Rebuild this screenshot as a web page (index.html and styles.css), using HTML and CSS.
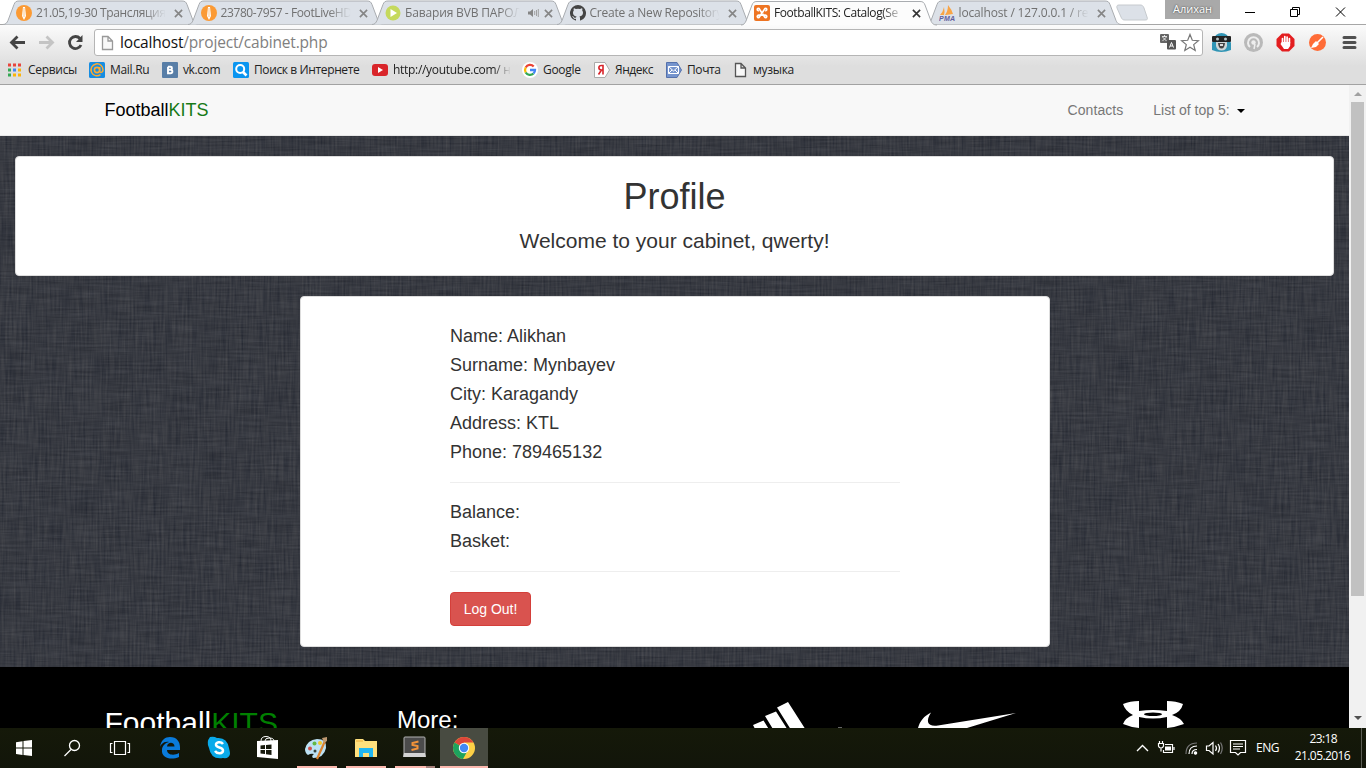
FILE: index.html
```html
<!DOCTYPE html>
<html lang="en">
<head>
<meta charset="utf-8">
<title>FootballKITS: Catalog</title>
<link rel="stylesheet" href="styles.css">
</head>
<body>
<svg class="defs" width="0" height="0">
  <defs>
    <symbol id="tab" viewBox="0 0 196 24"><path d="M0 24C3 24 4 22 5 20L11 4C12 1.500 13 .5 16 .5H179C182 .5 183 1.500 184 4L190 20C191 22 192 24 196 24" stroke="#a9acb0"/></symbol>
    <symbol id="x" viewBox="0 0 10 10"><path d="M1 1L9 9M9 1L1 9" fill="none" stroke="currentColor" stroke-width="1.800"/></symbol>
    <symbol id="flame" viewBox="0 0 16 16"><circle cx="8" cy="8" r="8" fill="#fb9a34"/><path d="M7 2H9L10 11L8 15L6 11Z" fill="#fff"/><path d="M8 3V12" stroke="#fbc88d"/></symbol>
    <symbol id="doc" viewBox="0 0 16 16"><path d="M3.500 1.500H9L13.500 6V14.500H3.500ZM9 1.500V6H13.500" fill="#f8f8f8" stroke="currentColor" stroke-width="1.300"/></symbol>
  </defs>
</svg>

<header class="chrome">
  <div class="tabs">
    <div class="tab"><svg class="shape"><use href="#tab"/></svg><svg class="i16"><use href="#flame"/></svg><span class="title t1">21.05,19-30 Трансляция</span><svg class="close"><use href="#x"/></svg></div>
    <div class="tab"><svg class="shape"><use href="#tab"/></svg><svg class="i16"><use href="#flame"/></svg><span class="title t2">23780-7957 - FootLiveHD</span><svg class="close"><use href="#x"/></svg></div>
    <div class="tab"><svg class="shape"><use href="#tab"/></svg><svg class="i16" viewBox="0 0 16 16"><circle cx="8" cy="8" r="7.500" fill="#c5d95d"/><path d="M5.500 4L12 8L5.500 12Z" fill="#fff"/></svg><span class="title t3">Бавария BVB ПАРОЛ</span><svg class="sound" viewBox="0 0 11 10"><path d="M0 3.500H2L5 1V9L2 6.500H0Z" fill="#858585"/><path d="M6.700 3V7M8.500 2V8M10.300 1V9" stroke="#999" stroke-width=".9"/></svg><svg class="close"><use href="#x"/></svg></div>
    <div class="tab"><svg class="shape"><use href="#tab"/></svg><svg class="i16" viewBox="0 0 16 16"><path fill="#444" d="M8 0A8 8 0 0 0 5.470 15.600C5.870 15.700 6 15.400 6 15.200V13.800C3.800 14.300 3.300 12.800 3.300 12.800C2.900 11.900 2.400 11.600 2.400 11.600C1.700 11.100 2.500 11.100 2.500 11.100C3.300 11.200 3.700 11.900 3.700 11.900C4.400 13.200 5.600 12.800 6 12.600C6.100 12.100 6.300 11.700 6.600 11.500C4.800 11.300 3 10.600 3 7.600C3 6.700 3.300 6 3.800 5.400C3.700 5.200 3.400 4.400 3.900 3.300C3.900 3.300 4.500 3.100 6 4.100A8 8 0 0 1 10 4.100C11.500 3.100 12.100 3.300 12.100 3.300C12.600 4.400 12.300 5.200 12.200 5.400C12.700 6 13 6.700 13 7.600C13 10.600 11.200 11.300 9.400 11.500C9.700 11.700 10 12.200 10 13V15.200C10 15.400 10.100 15.700 10.500 15.600A8 8 0 0 0 8 0Z"/></svg><span class="title t4">Create a New Repository</span><svg class="close"><use href="#x"/></svg></div>
    <div class="tab active"><svg class="shape"><use href="#tab"/></svg><svg class="i16" viewBox="0 0 16 16"><rect width="16" height="16" rx="2" fill="#ee7422"/><path d="M4.800 5.800C2.500 5.500 3 3 5 3.500L11 12.500C13 13 13.500 10.500 11.200 10.200H4.800C2.500 10.500 3 13 5 12.500L11 3.500C13 3 13.500 5.500 11.200 5.800" fill="none" stroke="#fff" stroke-width="1.700"/></svg><span class="title t5">FootballKITS: Catalog(Se</span><svg class="close"><use href="#x"/></svg></div>
    <div class="tab"><svg class="shape"><use href="#tab"/></svg><svg class="i16" viewBox="0 0 16 16"><path d="M1 10Q4 7 5 2Q6 7 5 10ZM6 10Q9 6 9 0Q13 5 14 9L7 10Z" fill="#f8a445"/><text x="0" y="15.500" class="pma" textLength="16">PMA</text></svg><span class="title t6">localhost / 127.0.0.1 / re</span><svg class="close"><use href="#x"/></svg></div>
    <svg class="newtab" viewBox="0 0 34 18"><path d="M4 1H25C27 1 28 1.500 29 4L32 13C33 15.500 32 16 30 16H10C8 16 7 15.500 6 13L2 4C1.500 2 2 1 4 1Z" fill="#dce1e8" stroke="#c6cace"/></svg>
    <div class="user">Алихан</div>
    <svg class="winbtns" viewBox="0 0 110 24"><path d="M2 12.500H12M47.500 9.500H54.500V16.500H47.500ZM49.500 9V7.500H56.500V14.500H55M93 7.500L102 16.500M102 7.500L93 16.500" fill="none" stroke="#000"/></svg>
  </div>

  <div class="toolbar">
    <svg class="nav" viewBox="0 0 94 34">
      <path d="M25 18.500H12M17.500 12.500L11.500 18.500L17.500 24.500" fill="none" stroke="#444" stroke-width="2.800"/>
      <path d="M39 18.500H52M46.500 12.500L52.500 18.500L46.500 24.500" fill="none" stroke="#c4c4c4" stroke-width="2.800"/>
      <path d="M80 14.500A6 6 0 1 0 81 21" fill="none" stroke="#444" stroke-width="2.800"/><path d="M82.500 11V18H76Z" fill="#444"/>
    </svg>
    <div class="omnibox"><svg class="i16 page-ico"><use href="#doc"/></svg><span class="url"><b>localhost</b>/project/cabinet.php</span>
      <svg class="omni-icons" viewBox="0 0 40 22"><rect x="0" y="2" width="9" height="9" rx="1" fill="#666"/><path d="M2 4.500H7M4.500 3V4.500M6.500 5L2.500 9M2.500 5L6.500 9" stroke="#fff" fill="none" stroke-width=".8"/><rect x="7" y="8" width="9" height="9.500" rx="1" fill="#555"/><path d="M9.500 15.500L11.500 10.500L13.500 15.500M10.300 14H12.700" stroke="#fff" fill="none"/><path d="M30 2.500L32.300 8.300L38.400 8.700L33.700 12.600L35.200 18.500L30 15.200L24.800 18.500L26.300 12.600L21.600 8.700L27.700 8.300Z" fill="#fff" stroke="#777" stroke-width="1.200"/></svg>
    </div>
    <svg class="exts" viewBox="0 0 163 34">
      <path d="M13 11Q18.500 7 24 11L28 19V26Q18 30 9 26V19Z" fill="#3195b5"/><rect x="9" y="12" width="19" height="6" rx="1" fill="#222"/><circle cx="14.500" cy="15" r="1.500" fill="#b8c4c8"/><circle cx="22.500" cy="15" r="1.500" fill="#b8c4c8"/><path d="M13 18H24V22Q23 26.500 18.500 26.500Q14 26.500 13 22Z" fill="#cfd6d7"/><path d="M15 19Q15.500 24.500 18.500 24.500Q21.500 24.500 22 19Z" fill="#444"/><path d="M17 20H20V22H17Z" fill="#ddd"/>
      <circle cx="50.500" cy="18.500" r="9.500" fill="#b9b9b9"/><path d="M47 23A5.500 5.500 0 1 1 54 23" fill="none" stroke="#eee" stroke-width="2"/><circle cx="50.500" cy="18.500" r="2.200" fill="#eee"/><path d="M52 20L51 25" stroke="#eee" stroke-width="1.500"/>
      <path d="M79 9.500H86L91.500 15V22L86 27.500H79L73.500 22V15Z" fill="#e31e20"/><path d="M79.500 19V14.500M81.800 18V12.500M84.100 18V13M86.400 19V14.500" stroke="#fff" stroke-width="1.700" stroke-linecap="round"/><path d="M78.700 18H87.200V22L85 25H81L77.500 20Z" fill="#fff"/>
      <circle cx="114.500" cy="18.500" r="8.500" fill="#ff6c37"/><path d="M120 13L114 19" stroke="#fff" stroke-width="1.600"/><path d="M113 17L116 20L113 23L108 24L110 20Z" fill="#fff"/>
      <path d="M141 13.500H152M141 18.500H152M141 23.500H152" stroke="#505050" stroke-width="3" stroke-linecap="round"/>
    </svg>
  </div>

  <nav class="bookmarks">
    <a class="bm b1"><svg class="i16" viewBox="0 0 16 16"><path d="M1 3H14" stroke="#e8453c" stroke-width="3" stroke-dasharray="3 2"/><path d="M1 8H4M1 13H4" stroke="#34a853" stroke-width="3"/><path d="M6 8H9" stroke="#4285f4" stroke-width="3"/><path d="M11 8H14M6 13H9M11 13H14" stroke="#fbb40a" stroke-width="3"/></svg><span>Сервисы</span></a>
    <a class="bm b2"><svg class="i16" viewBox="0 0 16 16"><rect width="16" height="16" rx="1.500" fill="#168de2"/><circle cx="8" cy="8" r="2.600" fill="none" stroke="#ffa930" stroke-width="1.600"/><path d="M10.700 5V9C10.700 11.500 14 10.500 14 8A6 6 0 1 0 11.500 12.700" fill="none" stroke="#ffa930" stroke-width="1.500"/></svg><span>Mail.Ru</span></a>
    <a class="bm b3"><svg class="i16" viewBox="0 0 16 16"><rect width="16" height="16" rx="1" fill="#587ea7"/><path d="M6 4.800H8.500C10.500 4.800 10.500 7.800 8.500 7.800H6M8.500 7.800C11 7.800 11 11.300 8.500 11.300H6V4.800" fill="none" stroke="#fff" stroke-width="1.900"/></svg><span>vk.com</span></a>
    <a class="bm b4"><svg class="i16" viewBox="0 0 16 16"><rect width="16" height="16" rx="1.500" fill="#0a95f0"/><circle cx="7.200" cy="7" r="4" fill="none" stroke="#fff" stroke-width="2"/><path d="M10 10L13.500 13.500" stroke="#fff" stroke-width="2.600"/></svg><span>Поиск в Интернете</span></a>
    <a class="bm b5"><svg class="i16" viewBox="0 0 16 16"><rect y="2" width="16" height="12" rx="3" fill="#d9252a"/><path d="M6 5L11 8L6 11Z" fill="#fff"/></svg><span>http://youtube.com/ н</span></a>
    <a class="bm b6"><svg class="i16" viewBox="0 0 16 16"><circle cx="8" cy="8" r="8" fill="#fff"/><g fill="none" stroke-width="2.300"><path d="M11.700 4.500A5 5 0 0 0 3.700 5.500" stroke="#ea4335"/><path d="M3.700 5.500A5 5 0 0 0 3.700 10.500" stroke="#fbbc05"/><path d="M3.700 10.500A5 5 0 0 0 11.500 11.500" stroke="#34a853"/><path d="M11.500 11.500Q13 10 13 8H8" stroke="#4285f4"/></g></svg><span>Google</span></a>
    <a class="bm b7"><svg class="i16" viewBox="0 0 16 16"><path d="M.5 .5H11L15.500 8L11 15.500H.5Z" fill="#fff" stroke="#aaa"/><path d="M9 12.500V3.500H7.500C4 3.500 4 8 7.500 8H9M7.500 8L4.500 12.500" fill="none" stroke="#d8232a" stroke-width="1.600"/></svg><span>Яндекс</span></a>
    <a class="bm b8"><svg class="i16" viewBox="0 0 16 16"><path d="M.5 .5H11L15.500 8L11 15.500H.5Z" fill="#7594cd" stroke="#5571ab"/><path d="M2.500 4.500H12.500V11.500H2.500ZM2.500 4.500L7.500 9L12.500 4.500M2.500 11.500L6 8M12.500 11.500L9 8" fill="none" stroke="#fff"/></svg><span>Почта</span></a>
    <a class="bm b9"><svg class="i16 dark"><use href="#doc"/></svg><span>музыка</span></a>
  </nav>
</header>

<div class="viewport">
  <div class="page">
    <svg class="linen" width="1349" height="643">
      <filter id="hz" x="0" y="0" width="100%" height="100%" color-interpolation-filters="sRGB"><feTurbulence type="fractalNoise" baseFrequency=".03 .5" numOctaves="2" seed="4"/><feColorMatrix values=".2 0 0 0 .118  .2 0 0 0 .128  .2 0 0 0 .158  0 0 0 0 1"/></filter>
      <filter id="vt" x="0" y="0" width="100%" height="100%" color-interpolation-filters="sRGB"><feTurbulence type="fractalNoise" baseFrequency=".5 .03" numOctaves="2" seed="9"/><feColorMatrix values=".24 0 0 0 .1  .22 0 0 0 .12  .18 0 0 0 .168  0 0 0 0 1"/></filter>
      <rect width="1349" height="643" filter="url(#hz)"/><rect width="1349" height="643" filter="url(#vt)" opacity=".5"/>
    </svg>
    <div class="navbar"><div class="container">
      <a class="brand">Football<span class="kits">KITS</span></a>
      <div class="links"><a>Contacts</a><a>List of top 5: <i class="caret"></i></a></div>
    </div></div>
    <main>
      <section class="panel intro"><h1>Profile</h1><p>Welcome to your cabinet, qwerty!</p></section>
      <section class="panel profile">
        <h4>Name: Alikhan</h4><h4>Surname: Mynbayev</h4><h4>City: Karagandy</h4><h4>Address: KTL</h4><h4>Phone: 789465132</h4>
        <hr>
        <h4>Balance:</h4><h4>Basket:</h4>
        <hr>
        <button class="logout">Log Out!</button>
      </section>
    </main>
    <footer>
      <div class="f-brand">Football<span>KITS</span></div>
      <div class="f-more">More:</div>
      <svg class="sponsors" viewBox="0 0 480 61">
        <g fill="#fff"><path d="M40 35.500L50.500 31L69 61H53ZM52 26.500L63 22L88 61H73ZM64 18L75 12.500L106 61H91Z" transform="translate(-14 22.500)"/>
        <path d="M191 61C193 54 197 49 204 45.500C198 55 201 60 211 58.500L289 46L240 61Z"/>
        <path d="M396 37Q403 34 412 34V44Q426 42 440 44V34Q449 34 456 37Q454 45 445 48Q454 51 457 57Q449 60 440 61V50Q426 53 412 50V61Q403 60 396 57Q398 51 406 48Q398 44 396 37Z"/></g>
        <ellipse cx="426" cy="47.200" rx="9" ry="1.700" fill="#000"/><path d="M111 60.500H115" stroke="#666"/>
      </svg>
    </footer>
  </div>
  <div class="scroll"><i class="up"></i><div class="thumb"></div><i class="down"></i></div>
</div>

<div class="taskbar">
  <svg class="tasks" viewBox="0 0 490 40">
    <rect x="440" width="48" height="40" fill="#484b41"/>
    <path d="M16 14.200L22.500 13.200V19.500H16ZM23.500 13L32 12V19.500H23.500ZM16 20.500H22.500V27L16 26ZM23.500 20.500H32V28L23.500 27Z" fill="#fff"/>
    <circle cx="74.500" cy="17.500" r="5" fill="none" stroke="#fff" stroke-width="1.300"/><path d="M71 21.500L64.500 28" stroke="#fff" stroke-width="1.300"/>
    <path d="M114.500 13.500H125.500V26.500H114.500ZM112.500 15.500H110.500V24.500H112.500M127.500 15.500H129.500V24.500H127.500" fill="none" stroke="#fff" stroke-width="1.200"/>
    <path d="M160 19C161 12 165 9 170 9C177 9 180 14 180 19V22H167C167 27 174 28 179 25V29C170 33 161 29 162 22C162 18 165 15 169 14C163 13 161 17 160 19ZM167 18.500H174.500C174.500 13.500 167.500 13.500 167 18.500Z" fill="#0a7bdb" fill-rule="evenodd"/>
    <path d="M210 9Q214 8 217 10Q227 9 229 20Q230 24 230 26Q229 31 223 30Q211 32 209 20Q206 14 210 9Z" fill="#09aaea"/><path d="M223 16C221 13.200 215.500 14 216 17C216.500 20.200 223 18.700 223 22.500C223 26 217 26 215 23" fill="none" stroke="#fff" stroke-width="2.500"/>
    <path d="M257 13L278 12V31L257 29Z" fill="#fff"/><path d="M261 13Q261 8.500 266 8.500Q271 8.500 271 13M265 13Q265 10 269 10Q274 10 274 13" fill="none" stroke="#fff"/><path d="M260.500 17.500L265 17V21H260.500ZM266 17L271.500 16.500V21H266ZM260.500 22H265V26L260.500 25.500ZM266 22H271.500V27L266 26.300Z" fill="#16190c"/>
    <path d="M305 21Q307 12 317 11Q327 11 326 20Q324 30 313 30Q311 28 314 26Q311 25 308 27Q305 25 305 21Z" fill="#bce1f4"/><circle cx="310" cy="20.500" r="2" fill="#cf5049"/><circle cx="314.500" cy="15.500" r="2" fill="#63b844"/><circle cx="320" cy="15" r="2" fill="#f4c72b"/><circle cx="315" cy="23" r="1.500" fill="#34443e"/><path d="M325 13L317 31" stroke="#da822e" stroke-width="2.200"/><path d="M322 10L327 9V13L324 15Z" fill="#bd9870"/>
    <path d="M355 12Q355 11 356 11H363L365 13H377V29H355Z" fill="#ffe07d"/><path d="M356 13H363" stroke="#eead38"/><path d="M359 20H373V29H369V25H363V29H359Z" fill="#20b6f2"/>
    <path d="M404 10Q404 9 405 9H424Q425 9 425 10V28H404Z" fill="#4b4b4b" stroke="#b2b2b2"/><path d="M404 25L403 29H426L425 25Z" fill="#d4d4d4"/><path d="M418.500 13.500L412.500 15V17L417.500 18V20.500L411.500 22" fill="none" stroke="#f39339" stroke-width="2"/>
    <circle cx="464" cy="20" r="11" fill="#fdd046"/><path d="M464 20L454.500 14.500A11 11 0 0 1 473.500 14.500H464Z" fill="#dc463a"/><path d="M464 20L454.500 14.500A11 11 0 0 0 463 31L468 22Z" fill="#1da35e"/><circle cx="464" cy="20" r="5.200" fill="#fff"/><circle cx="464" cy="20" r="4.200" fill="#4388f4"/>
    <path d="M297 39H337M346 39H386M395 39H426M440 39H488" stroke="#fbb8ae" stroke-width="2"/><path d="M426 39H435" stroke="#a5807a" stroke-width="2"/>
  </svg>
  <svg class="tray" viewBox="0 0 115 40"><g fill="none" stroke="#fff" stroke-width="1.200">
    <path d="M2 23L7.500 17.500L13 23" stroke-width="1.400"/>
    <path d="M30 16.500H37.500V24.500H28.500V22M39 19V22M24.500 13V15.500M27.500 13V15.500M23.500 15.500H28.500V18Q28 20 26 20Q24 20 23.500 18ZM26 20V23.500"/><rect x="30" y="18.500" width="6" height="4" fill="#fff" stroke="none"/>
    <path d="M51 26Q51 15 62 15" stroke="#777"/><path d="M54 26Q54 18 62 18M57 26Q57 21.500 62 21.500"/><circle cx="60.500" cy="25" r="1.200" fill="#fff"/>
    <path d="M71.500 18V22.500H74L78 26V14.500L74 18ZM80.500 17.500Q82.500 20 80.500 23M83 16Q86 20 83 24.500"/><path d="M85.500 14.500Q89 20 85.500 26" stroke="#777"/>
    <path d="M95.500 12.500H110.500V24.500H105.500L103 27L100.500 24.500H95.500ZM98 16H108M98 18.500H108M98 21H105"/></g></svg>
  <span class="lang">ENG</span>
  <div class="clock"><span>23:18</span><span>21.05.2016</span></div>
</div>
</body>
</html>
```

FILE: styles.css
```css
* { box-sizing: border-box; }
body { margin: 0; width: 1366px; height: 768px; overflow: hidden; display: flex; flex-direction: column; font-family: "Liberation Sans", Arial, sans-serif; }
svg { flex: none; display: block; }
.defs { position: absolute; }
.i16 { width: 16px; height: 16px; }

/* browser frame */
.chrome { height: 85px; flex: none; display: flex; flex-direction: column; font: 12px "Open Sans", "Noto Sans", sans-serif; background: linear-gradient(#fff 24px, #fbfbfb 25px, #dedede 66px, #dedede); border-bottom: 1px solid #a2a2a2; }
.tabs { height: 25px; display: flex; padding-left: 3px; background: #fff; border-bottom: 1px solid #a6a6a6; }
.tab { position: relative; isolation: isolate; flex: none; width: 196px; height: 25px; margin-right: -11.5px; padding: 5px 0 0 13px; display: flex; gap: 4px; color: #707070; }
.shape { position: absolute; z-index: -1; top: 0; left: 0; width: 196px; height: 25px; fill: #dce1e8; }
.active { z-index: 2; color: #222; }
.active .shape { fill: #fcfcfc; height: 26px; }
.title { flex: none; width: 131px; height: 16px; line-height: 16px; white-space: nowrap; letter-spacing: -.2px; -webkit-mask-image: linear-gradient(90deg, #000 82%, transparent 99%); }
.t1 { letter-spacing: -.35px; }
.t2 { letter-spacing: -.4px; }
.t4 { letter-spacing: -.22px; }
.t5 { letter-spacing: -.42px; }
.t6 { letter-spacing: -.15px; }
.close { width: 9px; height: 9px; margin: 4px 0 0 3px; color: #858585; }
.active .close { color: #333; }
.sound { width: 11px; height: 10px; margin-top: 3px; }
.tab .t3 { width: 116px; margin-right: -1px; letter-spacing: -.15px; }
.t3 + .sound + .close { margin-left: 1px; }
.t3 + .sound { margin-left: 4px; }
.pma { font: italic bold 7px "Liberation Sans"; fill: #5e5e9d; }
.newtab { width: 34px; height: 18px; margin: 4px 0 0 5px; }
.user { width: 55px; height: 19px; margin-left: 16px; background: #a9a9a9; color: #fff; font-size: 11px; line-height: 17px; text-align: center; text-shadow: 0 0 2px #333; }
.winbtns { width: 110px; height: 24px; margin-left: 23px; }
.toolbar { height: 32px; display: flex; }
.nav { width: 94px; height: 34px; margin-top: -1px; }
.omnibox { width: 1109px; height: 27px; margin-top: 4px; display: flex; align-items: center; background: #fff; border: 1px solid #b5b5b5; border-radius: 3px; }
.page-ico { margin-left: 4px; color: #999; }
.url { margin-left: 5px; font-size: 15.5px; line-height: 22px; padding-bottom: 2px; color: #808080; letter-spacing: -.18px; flex: 1; }
.url b { color: #111; font-weight: 400; }
.omni-icons { width: 40px; height: 22px; margin-right: 2px; }
.exts { width: 163px; height: 34px; margin-top: -1px; }
.bookmarks { display: flex; gap: 13px; padding: 5px 0 0 7px; color: #222; }
.bm { display: flex; gap: 5px; height: 16px; line-height: 16px; white-space: nowrap; flex: none; letter-spacing: -.3px; }
.b1 { width: 69px; } .b2 { width: 60px; } .b3 { width: 58px; } .b4 { width: 126px; } .b5 { width: 137px; } .b6 { width: 59px; } .b7 { width: 59px; } .b8 { width: 53px; } .b9 { width: 64px; }
.b3 { letter-spacing: -.4px; }
.b4 { letter-spacing: -.38px; }
.b7 { letter-spacing: -.45px; }
.b8 { letter-spacing: -.4px; }
.b5 span { -webkit-mask-image: linear-gradient(90deg, #000 85%, transparent); }
.dark { color: #555; }

/* page */
.viewport { flex: 1; min-height: 0; display: flex; }
.page { position: relative; isolation: isolate; width: 1349px; height: 643px; overflow: hidden; background: #363a43; }
.linen { position: absolute; z-index: -1; top: 0; left: 0; }
.navbar { height: 51px; background: #f8f8f8; border-bottom: 1px solid #e7e7e7; }
.container { width: 1140px; height: 50px; margin: 0 auto; display: flex; justify-content: space-between; align-items: center; }
.brand { font-size: 18px; color: #000; }
.kits { color: #177a17; }
.links { display: flex; gap: 30px; font-size: 14px; color: #777; }
.links a:first-child { letter-spacing: .06px; }
.caret { display: inline-block; margin-left: 3px; vertical-align: middle; border: 4px solid transparent; border-top-color: #000; border-bottom: 0; }
main { height: 531px; padding: 20px 15px; display: flex; flex-direction: column; align-items: center; gap: 20px; color: #333; }
.panel { background: #fff; border: 1px solid #ddd; border-radius: 4px; }
.intro { width: 1319px; height: 120px; padding-top: 20px; text-align: center; }
h1 { margin: 0 0 10px; font-size: 36px; line-height: 40px; font-weight: 400; }
.intro p { margin: 0; font-size: 21px; line-height: 28px; }
.profile { width: 750px; height: 351px; padding: 30px 149px 0 149.5px; }
h4 { margin: 0 0 10px; font-size: 18px; line-height: 19px; font-weight: 400; }
hr { margin: 20px 0; border: 0; border-top: 1px solid #eee; }
.logout { display: block; width: 81px; height: 34px; padding: 0; border: 1px solid #d43f3a; border-radius: 4px; background: #d9534f; color: #fff; font: 14px "Liberation Sans", sans-serif; }
footer { height: 61px; background: #000; color: #fff; display: flex; overflow: hidden; padding-left: 104.5px; }
.f-brand { width: 292.5px; padding-top: 39px; font-size: 30px; line-height: 34px; }
.f-brand span { color: #008000; }
.f-more { width: 330px; padding-top: 39px; font-size: 24px; line-height: 28px; }
.sponsors { width: 480px; height: 61px; }
.scroll { width: 17px; background: #f1f1f1; display: flex; flex-direction: column; align-items: center; }
.thumb { width: 13px; height: 494px; margin: 6px 0 120px; background: #c1c1c1; }
.up, .down { border: 4px solid transparent; }
.up { border-bottom-color: #a0a0a0; border-top: 0; margin-top: 7px; }
.down { border-top-color: #505050; border-bottom: 0; }

/* desktop taskbar */
.taskbar { height: 40px; flex: none; display: flex; align-items: center; background: linear-gradient(#151909, #12150a); color: #fff; font: 12px "Open Sans", sans-serif; }
.tasks { width: 490px; height: 40px; }
.tray { width: 115px; height: 40px; margin-left: 645px; }
.lang { width: 26px; margin: -1px 0 0 6px; letter-spacing: -.5px; }
.clock { width: 80px; height: 40px; border-right: 1px solid #5b5d54; padding: 2px 11px 0 0; display: flex; flex-direction: column; align-items: flex-end; line-height: 17px; letter-spacing: -.6px; }
.clock span:first-child { margin-right: 13px; }
```
